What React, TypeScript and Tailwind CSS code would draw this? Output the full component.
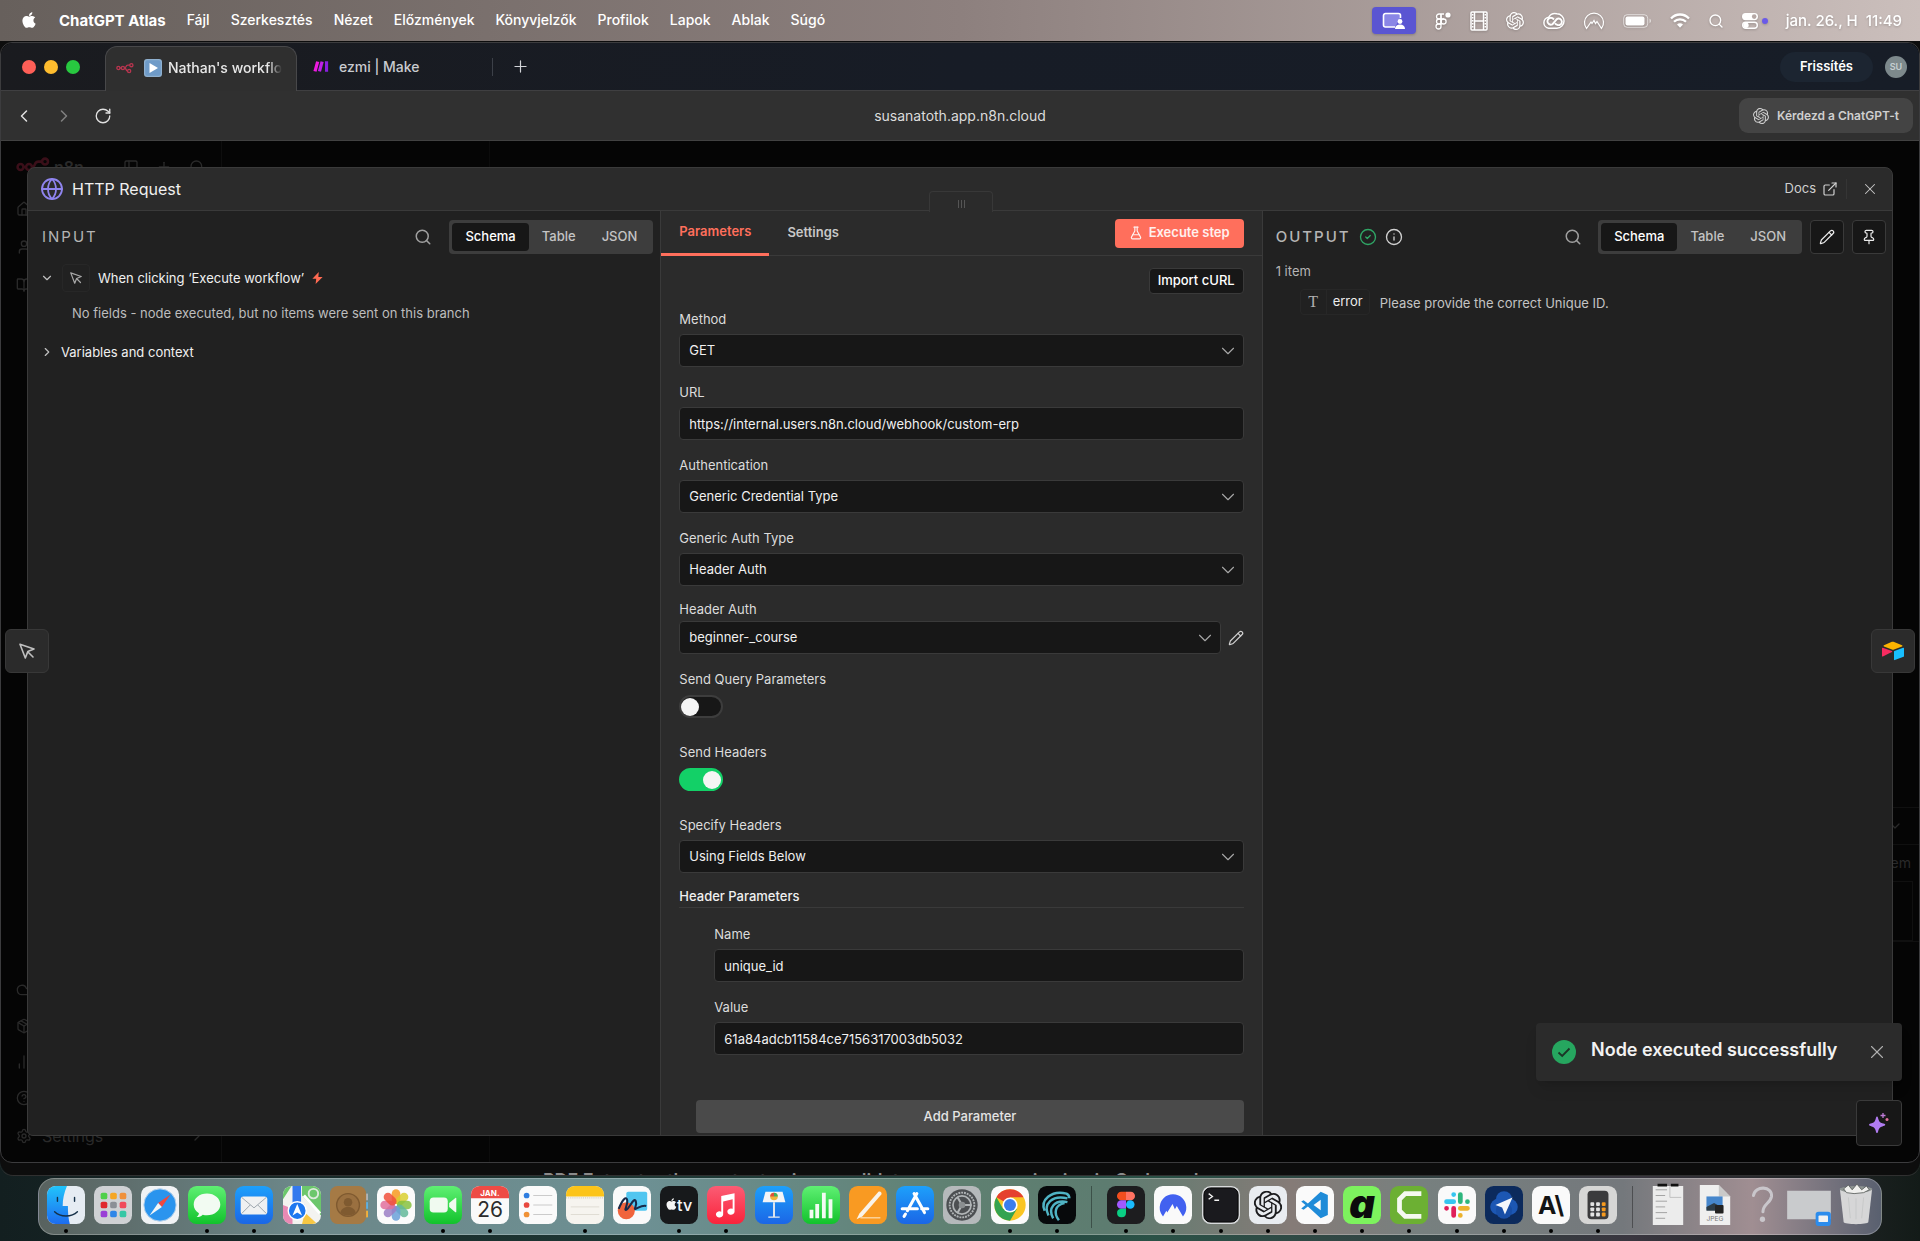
import { useState } from "react";
import type { ReactNode } from "react";
import {
  BookOpen, ChartNoAxesColumn, ChevronDown, ChevronLeft, ChevronRight, CircleHelp, CircleCheck, Cloud, ExternalLink,
  FlaskConical, Globe, House, Info, PanelLeft, Package, Pencil, Pin, Plus, RotateCw, Search, Settings, User, X,
} from "lucide-react";
import { FaApple } from "react-icons/fa";
import { SiOpenai } from "react-icons/si";

const menus = ["Fájl", "Szerkesztés", "Nézet", "Előzmények", "Könyvjelzők", "Profilok", "Lapok", "Ablak", "Súgó"];

function MenuBar() {
  return (
    <header className="flex h-[41px] shrink-0 items-center justify-between bg-linear-to-r from-[#67605c] via-[#8d807e] to-[#cbbfbc] pr-[18px] pl-5 text-sm text-white">
      <nav className="flex items-center gap-[21px] [text-shadow:0_1px_2px_rgba(0,0,0,0.25)]">
        <button aria-label="Apple"><FaApple className="size-[18px]" /></button>
        <button className="text-[15px] font-bold">ChatGPT Atlas</button>
        {menus.map((m) => (
          <button key={m} className="font-medium">{m}</button>
        ))}
      </nav>
      <div className="flex items-center gap-[18px] drop-shadow-[0_1px_1px_rgba(0,0,0,0.2)]">
        <button aria-label="Screen sharing" className="flex h-[27px] w-11 items-center justify-center rounded bg-[#5a55d2]">
          <svg viewBox="0 0 24 18" className="h-[18px] w-6" fill="none">
            <path d="M13 15H3.500a2 2 0 0 1-2-2V3.500a2 2 0 0 1 2-2h13a2 2 0 0 1 2 2V6" stroke="#fff" strokeWidth="1.600" fill="#8a86e6" />
            <circle cx="18" cy="9.500" r="2.400" fill="#fff" />
            <path d="M13 17c0-3 2-4.500 5-4.500s5 1.500 5 4.500z" fill="#fff" />
          </svg>
        </button>
        <svg viewBox="0 0 18 20" className="h-5 w-[18px]" fill="none" stroke="#fff" strokeWidth="1.300">
          <path d="M7 3H5a2.500 2.500 0 0 0 0 5h2zM7 3h3M7 8h3" />
          <path d="M7 8H5a2.500 2.500 0 0 0 0 5h2z" />
          <circle cx="9.600" cy="10.500" r="2.500" />
          <path d="M7 3v12.500A2.500 2.500 0 1 1 4.500 13H7" />
          <circle cx="14" cy="4" r="2.600" fill="#fff" stroke="none" />
        </svg>
        <svg viewBox="0 0 18 20" className="h-5 w-[18px]" fill="none" stroke="#fff" strokeWidth="1.500">
          <rect x="1" y="1" width="16" height="18" rx="1" />
          <path d="M4.500 1v18M13.500 1v18M4.500 10h9" />
          <path d="M2.700 3v14M15.300 3v14" strokeDasharray="1.500 1.500" />
        </svg>
        <SiOpenai className="size-[18px]" />
        <svg viewBox="0 0 24 18" className="h-[18px] w-[23px]" fill="none" stroke="#fff">
          <path d="M15.500 1.500a7.500 7.500 0 0 1 0 15H7A5.800 5.800 0 0 1 7 5a7.800 7.800 0 0 1 8.500-3.500z" strokeWidth="1.500" />
          <path d="M12.500 7.500 10.800 6a3.600 3.600 0 1 0 0 6.500L15.500 7a3.400 3.400 0 1 1 .5 6c-1.200-.2-1.800-.8-2.500-1.500" strokeWidth="2" />
        </svg>
        <svg viewBox="0 0 22 20" className="h-5 w-[22px]" fill="none" stroke="#fff" strokeWidth="1.200">
          <path d="M3.500 17.500A9.500 9.500 0 1 1 18.500 17.500L14 10.500l-1.500 2L11 9.500l-2 3-1-1.500z" />
        </svg>
        <svg viewBox="0 0 29 14" className="h-[14px] w-[29px]" fill="none">
          <rect x="0.700" y="0.700" width="24" height="12.600" rx="3.500" stroke="#fff" strokeOpacity=".6" />
          <rect x="2.500" y="2.500" width="19" height="9" rx="2" fill="#fff" />
          <path d="M26.500 4.800v4.400c1-.3 1.500-1.200 1.500-2.200s-.5-1.900-1.500-2.200z" fill="#fff" fillOpacity=".6" />
        </svg>
        <svg viewBox="0 0 20 15" className="h-[15px] w-5" fill="none" stroke="#fff" strokeWidth="2.300">
          <path d="M1 5.500C3.500 2.800 6.600 1.500 10 1.500s6.500 1.300 9 4" />
          <path d="M4 8.800a8.500 8.500 0 0 1 12 0" />
          <path d="M10 14.800 7 11.600a4.400 4.400 0 0 1 6 0z" fill="#fff" stroke="none" />
        </svg>
        <Search className="size-4" />
        <div className="flex items-center gap-1">
          <svg viewBox="0 0 16 16" className="size-4">
            <rect x="0" y="0" width="16" height="7.200" rx="3.600" fill="#fff" />
            <circle cx="12.200" cy="3.600" r="2.300" fill="#b5a8a5" />
            <rect x=".7" y="9.300" width="14.600" height="6" rx="3" fill="none" stroke="#fff" strokeWidth="1.400" />
            <circle cx="4" cy="12.300" r="2.700" fill="#fff" />
          </svg>
          <span className="size-1.5 rounded-full bg-[#6a5ae8]" />
        </div>
        <span className="text-[15px] font-medium whitespace-pre">jan. 26., H  11:49</span>
      </div>
    </header>
  );
}

function N8nMark({ className }: { className?: string }) {
  return (
    <svg viewBox="0 0 24 14" className={className} fill="none" stroke="currentColor" strokeWidth="1.800">
      <circle cx="3.200" cy="7" r="2.100" />
      <circle cx="9.200" cy="7" r="2.100" />
      <circle cx="20.500" cy="3.200" r="2.100" />
      <circle cx="17.500" cy="11" r="2.100" />
      <path d="M5.300 7h1.800M11.300 7c3 0 1-3.800 4.500-3.800h2.600M11.300 7c2.500 0 2 4 4 4" />
    </svg>
  );
}

function BrowserTabs() {
  return (
    <div className="flex h-12 items-end justify-between rounded-t-xl border-b border-[#3f3f41] bg-linear-to-r from-[#1a1b1f] via-[#171c26] to-[#171d27] pr-3">
      <div className="flex h-full items-end">
        <div className="flex h-full w-[104px] items-center gap-2 pl-[21px]">
          <button aria-label="Close window" className="size-3.5 rounded-full bg-[#ff5f57]" />
          <button aria-label="Minimize window" className="size-3.5 rounded-full bg-[#febc2e]" />
          <button aria-label="Zoom window" className="size-3.5 rounded-full bg-[#28c840]" />
        </div>
        <button className="-mb-px flex h-[45px] w-[192px] items-center gap-2.5 rounded-t-xl border border-b-0 border-[#48484a] bg-[#2f2f2f] px-2.5 pb-[3px] text-sm font-medium text-[#e8e8e8]">
          <N8nMark className="h-3 w-[18px] shrink-0 text-[#b8354f]" />
          <span className="flex items-center gap-1.5">
            <svg viewBox="0 0 18 18" className="size-[18px] shrink-0">
              <rect width="18" height="18" rx="3" fill="#8fb0cf" />
              <rect x="1.200" y="1.200" width="15.600" height="15.600" rx="2.200" fill="#6f9bc8" />
              <path d="M5.500 4v10l8.500-5z" fill="#fff" />
            </svg>
            <span className="whitespace-nowrap [mask-image:linear-gradient(to_right,black_88%,transparent)]">Nathan's workflo</span>
          </span>
        </button>
        <button className="flex h-full w-[195px] items-center gap-2.5 pl-4 text-sm font-medium text-[#c9cbd0]">
          <svg viewBox="0 0 18 14" className="h-[13px] w-4">
            <path d="M3.500 1 7 2 4 13 .5 12z" fill="#f01ae0" />
            <path d="M8.500 1 12 2 9 13 5.500 12z" fill="#c020e8" />
            <path d="M13.500 1H17v12h-3.500z" fill="#8a1fe0" />
          </svg>
          ezmi | Make
        </button>
        <div className="flex h-full items-center gap-[18px]">
          <span className="h-[18px] w-px bg-[#3c4048]" />
          <button aria-label="New tab"><Plus className="size-[19px] text-[#d2d4d8]" strokeWidth={1.5} /></button>
        </div>
      </div>
      <div className="flex h-full items-center gap-3">
        <button className="h-[30px] rounded-full bg-[#1c2531] px-5 text-[13px] font-semibold text-white">Frissítés</button>
        <button aria-label="Profile" className="size-[22px] rounded-full bg-[#7d898c] text-[9px] font-semibold text-[#c6cfd1]">SU</button>
      </div>
    </div>
  );
}

function Toolbar() {
  return (
    <div className="grid h-[50px] grid-cols-[1fr_auto_1fr] items-center border-b border-[#424242] bg-[#303030] px-1.5">
      <div className="flex items-center gap-5 pl-[7px] text-[#e0e0e0]">
        <button aria-label="Back"><ChevronLeft className="size-5" strokeWidth={1.8} /></button>
        <button aria-label="Forward" className="text-[#808080]"><ChevronRight className="size-5" strokeWidth={1.8} /></button>
        <button aria-label="Reload"><RotateCw className="size-[18px]" strokeWidth={1.8} /></button>
      </div>
      <input aria-label="Address" defaultValue="susanatoth.app.n8n.cloud" className="w-[400px] bg-transparent text-center text-sm text-[#dcdcdc] outline-none" />
      <button className="flex h-[35px] items-center gap-2 justify-self-end rounded-[9px] bg-[#444444] px-3.5 text-xs font-semibold text-[#cfcfcf]">
        <SiOpenai className="size-4" />
        Kérdezd a ChatGPT-t
      </button>
    </div>
  );
}

// Editor sidebar seen through the modal backdrop
function DimmedPage() {
  return (
    <div aria-hidden className="absolute inset-0 overflow-hidden text-[#2a2a2a]">
      <div className="flex h-full">
        <div className="flex w-[221px] flex-col justify-between border-r border-[#0e0e0e] pt-3.5 pr-4 pb-4 pl-[15px]">
          <div className="flex flex-col gap-[22px]">
            <div className="flex items-center justify-between">
              <span className="flex items-center gap-1 font-semibold"><N8nMark className="h-5 w-[34px] text-[#3a0f19]" />n8n</span>
              <span className="flex gap-[17px]"><PanelLeft className="size-4" /><Plus className="size-4" /><Search className="size-4" /></span>
            </div>
            <House className="size-4" />
            <User className="size-4" />
            <BookOpen className="size-4" />
          </div>
          <div className="flex flex-col gap-5">
            <Cloud className="size-4" />
            <Package className="size-4" />
            <ChartNoAxesColumn className="size-4" />
            <CircleHelp className="size-4" />
            <span className="flex h-5 items-center gap-2.5 text-base"><Settings className="size-4" />Settings<ChevronRight className="ml-auto size-4" /></span>
          </div>
        </div>
        <div className="w-[268px] border-r border-[#0c0c0c]" />
        <div className="flex flex-1 flex-col items-end justify-end">
          <div className="mb-[220px] w-full border-y border-[#101010]">
            <ChevronDown className="my-2.5 mr-4 ml-auto size-4" />
            <p className="border-t border-[#101010] py-2 pr-2 text-right text-sm">1 item</p>
            <div className="mr-1.5 h-[60px] border border-[#101010]" />
          </div>
        </div>
      </div>
    </div>
  );
}

function ViewTabs({ label }: { label: string }) {
  const [active, setActive] = useState("Schema");
  return (
    <div role="tablist" aria-label={label} className="flex h-[34px] items-stretch rounded bg-[#3d3d3d] p-[3px] text-[13px]">
      {["Schema", "Table", "JSON"].map((t) => (
        <button
          key={t}
          role="tab"
          aria-selected={active === t}
          onClick={() => setActive(t)}
          className={active === t ? "rounded bg-[#171717] px-[13px] font-medium text-white" : "px-[13px] font-medium text-[#c4c4c4]"}
        >
          {t}
        </button>
      ))}
    </div>
  );
}

function InputPanel() {
  return (
    <section className="flex flex-col bg-[#212121] pl-3">
      <div className="flex items-center pt-[9px] pr-[7px] pl-0.5">
        <h2 className="text-[15px] tracking-[2px] text-[#b5b5b5]">INPUT</h2>
        <button aria-label="Search input" className="mr-[17px] ml-auto text-[#a0a0a0]"><Search className="size-[18px]" /></button>
        <ViewTabs label="Input view" />
      </div>
      <div className="mt-[9px] flex h-[30px] items-center gap-2 text-[13px] leading-5 text-[#f0f0f0]">
        <button aria-label="Collapse node"><ChevronDown className="size-3.5 text-[#c0c0c0]" /></button>
        <span className="flex h-7 w-7 items-center justify-center rounded border border-[#272727]">
          <MousePointerIcon className="size-3 text-[#a8a8a8]" />
        </span>
        <span>When clicking ‘Execute workflow’</span>
        <svg viewBox="0 0 12 14" className="h-3 w-[11px]"><path d="M7.500 0 0 8h4.500L3.800 14 12 5.800H7z" fill="#ff6a52" /></svg>
      </div>
      <p className="mt-2.5 pl-8 text-[13px] leading-5 text-[#bdbdbd]">No fields - node executed, but no items were sent on this branch</p>
      <button className="mt-[19px] flex items-center gap-[7px] text-left text-[13px] leading-5 text-[#f0f0f0]">
        <ChevronRight className="size-3.5 text-[#c0c0c0]" />
        Variables and context
      </button>
    </section>
  );
}

function MousePointerIcon({ className }: { className?: string }) {
  return (
    <svg viewBox="0 0 16 16" className={className} fill="none" stroke="currentColor" strokeWidth="1.600" strokeLinejoin="round" strokeLinecap="round">
      <path d="M1 1.200 15 6 8.800 8.600 6.300 15z" />
      <path d="m9 9 5 5" />
    </svg>
  );
}

function Field({ id, label, children }: { id: string; label: string; children: ReactNode }) {
  return (
    <div className="flex flex-col gap-[5px]">
      <label htmlFor={id} className="text-[13px] leading-5 text-[#dcdcdc]">{label}</label>
      {children}
    </div>
  );
}

const box = "h-[33px] w-full rounded border border-[#3a3a3a] bg-[#171717] px-[9px] text-[13px] text-[#f0f0f0] outline-none";

function SelectBox({ id, value }: { id: string; value: string }) {
  return (
    <div className="relative min-w-0 flex-1">
      <select id={id} className={`${box} block appearance-none`}>
        <option>{value}</option>
      </select>
      <ChevronDown className="pointer-events-none absolute top-1.5 right-[5px] size-[22px] text-[#a8a8a8]" strokeWidth={1.2} />
    </div>
  );
}

function Toggle({ id, on }: { id: string; on?: boolean }) {
  return (
    <label className="mt-px mb-[9px] block h-[23px] w-11 cursor-pointer">
      <input id={id} type="checkbox" defaultChecked={on} className="peer sr-only" />
      <span className="flex h-[23px] w-11 items-center rounded-full border-2 border-[#3d3d3d] bg-[#171717] peer-checked:justify-end peer-checked:border-[#13d067] peer-checked:bg-[#13d067]">
        <span className="size-[18px] rounded-full bg-[#f5f5f5]" />
      </span>
    </label>
  );
}

function ParametersPanel() {
  return (
    <section className="relative flex flex-col border-x border-[#3a3a3a] bg-[#2b2b2b]">
      <div className="absolute -top-5 left-1/2 flex h-[21px] w-16 -translate-x-1/2 items-center justify-center gap-0.5 rounded-t border border-b-0 border-[#383838] bg-[#2b2b2b] pt-1">
        <span className="h-2 w-px bg-[#555]" />
        <span className="h-2 w-px bg-[#555]" />
        <span className="h-2 w-px bg-[#555]" />
      </div>
      <div className="flex h-[45px] items-center justify-between border-b border-[#3a3a3a] pr-[18px]">
        <div role="tablist" className="flex h-full text-[13px] font-semibold">
          <button role="tab" aria-selected="true" className="-mb-px border-b-[3px] border-[#ff6f5c] px-[18px] text-[#ff6f5c]">Parameters</button>
          <button role="tab" aria-selected="false" className="px-[18px] text-[#c8c8c8]">Settings</button>
        </div>
        <button className="flex h-[29px] items-center gap-1.5 rounded bg-[#ff6f5c] px-3.5 text-[13px] font-semibold text-[#fff0ee]">
          <FlaskConical className="size-3.5" />
          Execute step
        </button>
      </div>
      <form className="flex flex-1 flex-col px-[18px] pt-3 pb-0.5">
        <button type="button" className="h-[26px] self-end rounded border border-[#3a3a3a] bg-[#171717] px-2 text-[13px] font-medium text-white">Import cURL</button>
        <div className="mt-[15px] flex flex-col gap-[15px]">
          <Field id="method" label="Method"><SelectBox id="method" value="GET" /></Field>
          <Field id="url" label="URL">
            <input id="url" className={box} defaultValue="https://internal.users.n8n.cloud/webhook/custom-erp" />
          </Field>
          <Field id="auth" label="Authentication"><SelectBox id="auth" value="Generic Credential Type" /></Field>
          <Field id="authType" label="Generic Auth Type"><SelectBox id="authType" value="Header Auth" /></Field>
        </div>
        <div className="mt-[13px] flex flex-col gap-0.5">
          <label htmlFor="headerAuth" className="text-[13px] leading-5 text-[#dcdcdc]">Header Auth</label>
          <div className="flex items-center gap-[7px]">
            <SelectBox id="headerAuth" value="beginner-_course" />
            <button type="button" aria-label="Edit credential"><Pencil className="size-4 text-[#d0d0d0]" strokeWidth={1.8} /></button>
          </div>
        </div>
        <div className="mt-[15px] flex flex-col gap-[15px]">
          <Field id="sendQuery" label="Send Query Parameters"><Toggle id="sendQuery" /></Field>
          <Field id="sendHeaders" label="Send Headers"><Toggle id="sendHeaders" on /></Field>
          <Field id="specify" label="Specify Headers"><SelectBox id="specify" value="Using Fields Below" /></Field>
        </div>
        <h3 className="mt-[13px] border-b border-[#3a3a3a] pb-px text-[13px] leading-5 font-medium text-[#f0f0f0]">Header Parameters</h3>
        <div className="mt-4 flex flex-col gap-[15px] pl-[35px]">
          <Field id="hname" label="Name"><input id="hname" className={box} defaultValue="unique_id" /></Field>
          <Field id="hvalue" label="Value"><input id="hvalue" className={box} defaultValue="61a84adcb11584ce7156317003db5032" /></Field>
        </div>
        <button type="button" className="mt-auto ml-[17px] h-[33px] rounded-sm bg-[#4a4a4a] text-[13px] font-medium text-[#e4e4e4]">Add Parameter</button>
      </form>
    </section>
  );
}

function OutputPanel() {
  return (
    <section className="flex flex-col bg-[#212121] pl-[13px]">
      <div className="flex items-center gap-2 pt-[9px] pr-1.5">
        <h2 className="text-[15px] font-medium tracking-[2px] text-[#b5b5b5]">OUTPUT</h2>
        <CircleCheck className="size-[18px] text-[#2fa565]" strokeWidth={1.8} />
        <Info className="size-[18px] text-[#d0d0d0]" strokeWidth={1.8} />
        <button aria-label="Search output" className="mr-2 ml-auto text-[#a0a0a0]"><Search className="size-[18px]" /></button>
        <ViewTabs label="Output view" />
        <button aria-label="Edit output" className="flex size-[34px] items-center justify-center rounded border border-[#3a3a3a] bg-[#171717] text-[#ececec]"><Pencil className="size-4" strokeWidth={1.8} /></button>
        <button aria-label="Pin data" className="flex size-[34px] items-center justify-center rounded border border-[#3a3a3a] bg-[#171717] text-[#ececec]"><Pin className="size-4" strokeWidth={1.8} /></button>
      </div>
      <p className="mt-[7px] text-[13px] leading-5 text-[#b5b5b5]">1 item</p>
      <div className="mt-2 flex items-center pl-6 text-[13px]">
        <div className="flex h-[26px] items-center rounded border border-[#272727]">
          <span className="flex h-full w-[26px] items-center justify-center border-r border-[#272727] font-['Liberation_Serif',serif] text-base text-[#b0b0b0]">T</span>
          <span className="px-1.5 text-[#ececec]">error</span>
        </div>
        <span className="pt-1 pl-2.5 text-[#c4c4c4]">Please provide the correct Unique ID.</span>
      </div>
    </section>
  );
}

function NodeModal() {
  return (
    <div className="relative mx-[26px] mt-[26px] mb-[26px] flex flex-1 flex-col overflow-hidden rounded-t-lg rounded-b-md border border-[#3a3a3a] bg-[#2b2b2b]">
      <div className="flex h-[43px] shrink-0 items-center gap-2 border-b border-[#3a3a3a] pr-[13px] pl-3">
        <Globe className="size-6 text-[#8f84ee]" strokeWidth={1.8} />
        <h1 className="text-base text-[#f0f0f0]">HTTP Request</h1>
        <a href="#docs" className="ml-auto flex items-center gap-1.5 text-[13px] text-[#d0d0d0]">
          Docs <ExternalLink className="size-4" strokeWidth={1.8} />
        </a>
        <span className="h-5 w-px bg-[#353535]" />
        <button aria-label="Close" className="ml-1.5"><X className="size-[18px] text-[#c8c8c8]" strokeWidth={1.4} /></button>
      </div>
      <div className="grid flex-1 grid-cols-[633fr_603fr_630fr]">
        <InputPanel />
        <ParametersPanel />
        <OutputPanel />
      </div>
    </div>
  );
}

function Toast() {
  return (
    <div role="status" className="absolute right-[17px] bottom-[81px] flex h-[58px] w-[366px] items-center rounded bg-[#2b2b2b] pr-3.5 pl-4 shadow-lg">
      <svg viewBox="0 0 24 24" className="size-6" fill="none">
        <circle cx="12" cy="12" r="12" fill="#26a65f" />
        <path d="m6.500 12.500 3.700 3.500 7.300-7.500" stroke="#1b3526" strokeWidth="1.800" />
      </svg>
      <span className="ml-[15px] pb-1 text-lg font-semibold text-[#f2f2f2]">Node executed successfully</span>
      <button aria-label="Dismiss" className="ml-auto"><X className="size-[22px] text-[#b0b0b0]" strokeWidth={1.2} /></button>
    </div>
  );
}

function BrowserWindow() {
  return (
    <div className="mt-px flex flex-1 flex-col overflow-hidden rounded-xl border border-[#3c3c3e] bg-[#050505]">
      <BrowserTabs />
      <Toolbar />
      <main className="relative flex flex-1 flex-col">
        <DimmedPage />
        <NodeModal />
        <button aria-label="Previous node" className="absolute top-[488px] left-1 flex size-11 items-center justify-center rounded-md border border-[#383838] bg-[#2b2b2b]">
          <MousePointerIcon className="size-4 text-[#c0c0c0]" />
        </button>
        <button aria-label="Next node" className="absolute top-[488px] right-1 flex size-11 items-center justify-center rounded-md border border-[#383838] bg-[#2b2b2b]">
          <svg viewBox="0 0 24 20" className="h-5 w-6">
            <path d="M12.500.8a2 2 0 0 0-1.600 0L3 4.200c-.6.200-.6 1 0 1.200l8 3.200a3 3 0 0 0 2 0l8-3.200c.6-.2.600-1 0-1.200z" fill="#fcb400" />
            <path d="M13 10.600v8c0 .4.400.6.800.500l8.800-3.400c.3-.1.400-.3.400-.5v-8c0-.4-.4-.6-.8-.5l-8.800 3.400c-.2.100-.4.300-.4.500z" fill="#18bfff" />
            <path d="m11 11-2.700 1.300-6.400 3.100c-.4.200-.9-.1-.9-.5V7.200c0-.4.400-.7.800-.5L10.800 10c.5.200.6.800.2 1z" fill="#f82b60" />
          </svg>
        </button>
        <Toast />
        <button aria-label="AI assistant" className="absolute right-[17px] bottom-4 flex size-[46px] items-center justify-center rounded border border-[#3a3a3a] bg-[#171717]">
          <svg viewBox="0 0 20 20" className="size-5">
            <path d="M8 3.500c1 0 1 1.500 1.500 3 .7 2.200 1.600 3 3.800 3.700 1.500.5 3 .6 3 1.600s-1.500 1.100-3 1.600c-2.200.7-3.100 1.500-3.800 3.700-.5 1.500-.5 3-1.500 3s-1-1.500-1.500-3c-.7-2.200-1.600-3-3.800-3.700-1.500-.5-2.700-.6-2.700-1.600s1.200-1.100 2.700-1.600c2.200-.7 3.100-1.500 3.800-3.700.5-1.500.5-3 1.500-3z" fill="#b07cf0" />
            <path d="M14 0v5M11.500 2.500h5" stroke="#c07cd8" strokeWidth="1.300" />
            <circle cx="18" cy="6.500" r="1.500" fill="#e0709c" />
          </svg>
        </button>
      </main>
    </div>
  );
}

function Tile({ fill, children }: { fill: string; children?: ReactNode }) {
  return (
    <>
      <rect width="40" height="40" rx="9" fill={fill} />
      {children}
    </>
  );
}

const launchColors = ["#4fd04a", "#f5a623", "#f0913a", "#e0282e", "#8b8f96", "#f04a5c", "#9a3fd6", "#2f86e8", "#35c7a5"];
const petals = ["#f79a1e", "#d9cf2f", "#86c13f", "#63b89a", "#6aa0d8", "#9b7fc6", "#e0709c", "#f0503c"];

const apps: { name: string; running?: boolean; art: ReactNode }[] = [
  {
    name: "Finder", running: true,
    art: (
      <>
        <Tile fill="#e6ecf3" />
        <path d="M9 0h12c-3 7-4.500 14-4.500 21H22c0 7 .5 13 2 19H9a9 9 0 0 1-9-9V9a9 9 0 0 1 9-9z" fill="url(#finder)" />
        <path d="M11 12v4M29 12v4M8 27c6 6 18 6 24 0" stroke="#153048" strokeWidth="1.500" fill="none" strokeLinecap="round" />
      </>
    ),
  },
  {
    name: "Launchpad",
    art: (
      <Tile fill="#cfd1d4">
        {launchColors.map((c, i) => (
          <rect key={c} x={7 + (i % 3) * 10} y={7 + Math.floor(i / 3) * 9.5} width="7" height="7" rx="2" fill={c} />
        ))}
      </Tile>
    ),
  },
  {
    name: "Safari",
    art: (
      <Tile fill="#f1f3f5">
        <circle cx="20" cy="20" r="17" fill="#2a94ee" stroke="#b9d3ea" strokeWidth="1" />
        <path d="m31 9-9 13-4-4z" fill="#f0483e" />
        <path d="M9 31l9-13 4 4z" fill="#f3f6f8" />
      </Tile>
    ),
  },
  {
    name: "Messages", running: true,
    art: (
      <Tile fill="url(#green)">
        <path d="M20 8c-8 0-14 5-14 11.500 0 4 2 7 5.500 9.200 0 1.500-1 3-2.500 4 3 0 5-1 6.500-2.500 1.500.4 3 .6 4.500.6 8 0 14-5 14-11.300S28 8 20 8z" fill="#f2fbf2" />
      </Tile>
    ),
  },
  {
    name: "Mail", running: true,
    art: (
      <Tile fill="url(#blue)">
        <rect x="6" y="11" width="28" height="19" rx="3" fill="#f0f1f2" />
        <path d="m7 12 13 11 13-11M7 29l9-9M33 29l-9-9" stroke="#9aa3ab" fill="none" />
      </Tile>
    ),
  },
  {
    name: "Maps", running: true,
    art: (
      <>
        <Tile fill="#f3f3f0" />
        <path d="M0 9a9 9 0 0 1 9-9L0 14zM20 0h11a9 9 0 0 1 9 9v22L20 10z" fill="#6cc76c" />
        <path d="M0 20l10 4v16H9a9 9 0 0 1-9-9z" fill="#e989b4" />
        <path d="M20 40l3-12 12 11-4 1z" fill="#f7c744" />
        <path d="M10 0h9v26h-9z" fill="#3379ee" />
        <path d="M22 10l17 19" stroke="#fff" strokeWidth="3" />
        <circle cx="32" cy="8" r="5" fill="none" stroke="#dceadc" strokeWidth="2" />
        <circle cx="15" cy="26" r="9.500" fill="#1f78f0" stroke="#fff" strokeWidth="1.500" />
        <path d="m15 19 5 12-5-3-5 3z" fill="#fff" />
      </>
    ),
  },
  {
    name: "Contacts",
    art: (
      <>
        <path d="M36 8h4v7h-4z" fill="#b0b3b5" /><path d="M36 17h4v7h-4z" fill="#5eb0e0" /><path d="M36 26h4v7h-4z" fill="#f0b03c" />
        <rect width="38" height="40" rx="8" fill="#a57a45" />
        <circle cx="19" cy="20" r="12" fill="#9a7040" stroke="#7f5a30" strokeWidth="1.500" />
        <circle cx="19" cy="17" r="4.500" fill="#7f5a30" /><path d="M11 28c1-8 15-8 16 0-4 4-12 4-16 0z" fill="#7f5a30" />
      </>
    ),
  },
  {
    name: "Photos",
    art: (
      <Tile fill="#fbfbfb">
        {petals.map((c, i) => (
          <rect key={c} x="15.500" y="3.500" width="9" height="15.500" rx="4.500" fill={c} opacity=".85" transform={`rotate(${i * 45} 20 20)`} />
        ))}
      </Tile>
    ),
  },
  {
    name: "FaceTime", running: true,
    art: (
      <Tile fill="url(#green)">
        <rect x="6" y="12" width="19" height="16" rx="4" fill="#f0faf0" />
        <path d="m26.500 18 6.500-5.500c.6-.4 1 0 1 .5v14c0 .6-.5 1-1 .500L26.500 22z" fill="#f0faf0" />
      </Tile>
    ),
  },
  {
    name: "Calendar", running: true,
    art: (
      <>
        <Tile fill="#fafafa" />
        <path d="M0 13V9a9 9 0 0 1 9-9h22a9 9 0 0 1 9 9v4z" fill="#ee4b45" />
        <text x="20" y="10" fontSize="8.500" fontWeight="700" fill="#fff" textAnchor="middle">JAN.</text>
        <text x="20" y="33" fontSize="22" fill="#2c2c2c" textAnchor="middle">26</text>
      </>
    ),
  },
  {
    name: "Reminders",
    art: (
      <Tile fill="#fafafa">
        <circle cx="8" cy="10" r="3" fill="#2f7de0" /><circle cx="8" cy="20" r="3" fill="#e8483e" /><circle cx="8" cy="30" r="3" fill="#f09236" />
        <path d="M15 10h20M15 20h20M15 30h20" stroke="#c8c8c8" />
      </Tile>
    ),
  },
  {
    name: "Notes", running: true,
    art: (
      <>
        <Tile fill="#f6f4ef" />
        <path d="M0 11V9a9 9 0 0 1 9-9h22a9 9 0 0 1 9 9v2z" fill="#fcc419" />
        <path d="M0 12.500h40" stroke="#c9c4b4" strokeDasharray="1 1" /><path d="M5 22h30M5 30h30" stroke="#dedbd2" />
      </>
    ),
  },
  {
    name: "Freeform",
    art: (
      <Tile fill="#fafafa">
        <rect x="14" y="6" width="22" height="20" rx="2" fill="#52c6f0" /><circle cx="14" cy="26" r="9" fill="#f0643c" />
        <path d="M6 24c4-10 8-14 9-9s-4 11-1 10 8-14 10-9-3 9 0 8 6-4 11-3" fill="none" stroke="#182a4a" strokeWidth="2.200" />
      </Tile>
    ),
  },
  {
    name: "TV", running: true,
    art: (
      <Tile fill="#17191b">
        <FaApple x="5" y="12" size={14} color="#f5f5f5" />
        <text x="18" y="26" fontSize="17" fontWeight="500" fill="#f5f5f5">tv</text>
      </Tile>
    ),
  },
  {
    name: "Music", running: true,
    art: (
      <Tile fill="url(#red)">
        <path d="M15 10.500 29 7.500V27a3.800 3.300 0 1 1-2-3V14l-10 2.200V30a3.800 3.300 0 1 1-2-3z" fill="#fff" />
      </Tile>
    ),
  },
  {
    name: "Keynote",
    art: (
      <Tile fill="url(#blue)">
        <path d="M11 6h18l3 11H8z" fill="#f3f5f7" /><path d="M19 17h2v15h-2zM14 32h12v1.500H14z" fill="#e6eaee" />
        <circle cx="20" cy="11" r="4" fill="#f0b43c" /><path d="M20 11V7a4 4 0 0 1 4 4z" fill="#40b060" /><path d="M20 11h-4a4 4 0 0 1 4-4z" fill="#e0503c" />
      </Tile>
    ),
  },
  {
    name: "Numbers",
    art: (
      <Tile fill="url(#green)">
        <path d="M8 25h4v9H8zM14 19h4v15h-4zM21 7h4v27h-4zM28 14h4v20h-4z" fill="#f3fbf3" />
      </Tile>
    ),
  },
  {
    name: "Pages",
    art: (
      <Tile fill="#f99a22">
        <path d="M31 6 11 29l-3 6 6-3L34 9c1-2-1-4-3-3z" fill="#faf3e8" /><path d="M12 33.500h21" stroke="#fde3bd" strokeWidth="1.200" />
      </Tile>
    ),
  },
  {
    name: "App Store",
    art: (
      <Tile fill="url(#blue)">
        <path d="M22 8 12 26M19 8l11 20M6.500 24h16M27 24h6.500M10 29.500l-1.500 2.500" stroke="#fff" strokeWidth="3.200" strokeLinecap="round" />
      </Tile>
    ),
  },
  {
    name: "System Settings",
    art: (
      <Tile fill="#b5b9bb">
        <circle cx="20" cy="20" r="16.500" fill="#4c4f52" /><circle cx="20" cy="20" r="13" fill="none" stroke="#b0b4b6" strokeWidth="2" strokeDasharray="2 1" />
        <circle cx="20" cy="20" r="9.500" fill="none" stroke="#b0b4b6" strokeWidth="1.800" />
        <path d="M20 20h10M20 20l-5-8.600M20 20l-5 8.600" stroke="#b0b4b6" strokeWidth="2.200" /><circle cx="20" cy="20" r="3.500" fill="#8a8e90" />
      </Tile>
    ),
  },
  {
    name: "Chrome", running: true,
    art: (
      <Tile fill="#fbfbfb">
        <circle cx="20" cy="20" r="16.500" fill="#f9c522" />
        <path d="M20 20 5.700 11.800A16.500 16.500 0 0 1 34.300 11.800H20z" fill="#e5402f" />
        <path d="M5.700 11.800A16.500 16.500 0 0 0 20 36.500l7.200-12.400L20 20l-7.200 4.100z" fill="#34a350" />
        <circle cx="20" cy="20" r="8" fill="#fff" /><circle cx="20" cy="20" r="6.300" fill="#3b7ded" />
      </Tile>
    ),
  },
  {
    name: "Wave", running: true,
    art: (
      <Tile fill="#07090b">
        <path d="M7 26C2 15 14 4 30 8c2 1 3 3 3 5M11 31C5 19 15 9 31 13M16 34C10 24 17 14 31 17M22 36c-6-8-4-16 6-18" fill="none" stroke="#4fb3c4" strokeWidth="2.600" />
      </Tile>
    ),
  },
];

const moreApps: typeof apps = [
  {
    name: "Figma", running: true,
    art: (
      <Tile fill="#1d1d1f">
        <path d="M20 6h-5a4.500 4.500 0 0 0 0 9h5z" fill="#f24e1e" /><path d="M20 6h5a4.500 4.500 0 0 1 0 9h-5z" fill="#ff7262" />
        <path d="M20 15h-5a4.500 4.500 0 0 0 0 9h5z" fill="#a259ff" /><circle cx="24.500" cy="19.500" r="4.500" fill="#1abcfe" />
        <path d="M15 24h5v4.500a4.700 4.500 0 1 1-5-4.500z" fill="#0acf83" />
      </Tile>
    ),
  },
  {
    name: "NordVPN", running: true,
    art: (
      <Tile fill="#fafafa">
        <path d="M9.500 32A14 14 0 1 1 30.500 32L24 21l-2 3.500L19.500 19 14 28l-1-2z" fill="#4261f0" />
      </Tile>
    ),
  },
  {
    name: "Terminal", running: true,
    art: (
      <Tile fill="#d8dadc">
        <rect x="2" y="2" width="36" height="36" rx="7" fill="#1a1a1e" stroke="#000" />
        <path d="m7 8 4 3-4 3M13 15h5" stroke="#f2f2f2" strokeWidth="1.400" fill="none" />
      </Tile>
    ),
  },
  { name: "ChatGPT", running: true, art: <Tile fill="#e9ecf0"><SiOpenai x="5" y="5" size={30} color="#1c1c1e" /></Tile> },
  {
    name: "Visual Studio Code", running: true,
    art: (
      <Tile fill="#fafafa">
        <path d="M26 6 12.500 18.500 8 15l-2.500 1.200L10 20l-4.500 3.800L8 25l4.500-3.500L26 34l7.500-3.500v-21zm0 8.500v11L18.500 20z" fill="#1f8bd8" />
      </Tile>
    ),
  },
  {
    name: "Anytype", running: true,
    art: (
      <Tile fill="#7df25e">
        <text x="20" y="34" fontSize="42" fontWeight="900" fontStyle="italic" fill="#0c0c0c" textAnchor="middle">a</text>
      </Tile>
    ),
  },
  { name: "Camtasia", running: true, art: <Tile fill="#6cb033"><path d="M33 8H16l-6 6v12l6 6h17" fill="none" stroke="#f5f9f0" strokeWidth="5" /></Tile> },
  {
    name: "Slack", running: true,
    art: (
      <Tile fill="#fafafa">
        <g strokeWidth="5" strokeLinecap="round">
          <path d="M9 16.500h7.500M16.500 9h0" stroke="#36c5f0" />
          <path d="M23.500 9v7.500M31 16.500h0" stroke="#2eb67d" />
          <path d="M16.500 23.500V31M9 23.500h0" stroke="#e01e5a" />
          <path d="M23.500 23.500H31M23.500 31h0" stroke="#ecb22e" />
        </g>
      </Tile>
    ),
  },
  {
    name: "Navigator", running: true,
    art: (
      <Tile fill="#0c2a5c">
        <circle cx="20" cy="14" r="8.500" fill="#1c57b4" /><circle cx="14" cy="22" r="8.500" fill="#1c57b4" /><circle cx="26" cy="22" r="8.500" fill="#1c57b4" /><circle cx="20" cy="26" r="8.500" fill="#184ea6" />
        <path d="M29 12 11 20l7 2.500L21 30z" fill="#f4f7fb" />
      </Tile>
    ),
  },
  {
    name: "Anthropic", running: true,
    art: (
      <Tile fill="#fafafa">
        <text x="20" y="29" fontSize="26" fontWeight="700" fill="#141414" textAnchor="middle">A\</text>
      </Tile>
    ),
  },
  {
    name: "Calculator", running: true,
    art: (
      <Tile fill="#d6d6d5">
        <rect x="9" y="5" width="22" height="30" rx="4" fill="#3b3b3d" />
        {[0, 1, 2].map((r) => [0, 1, 2].map((c) => (
          <rect key={`${r}${c}`} x={12 + c * 6} y={17 + r * 5.5} width="4" height="4" rx="1" fill={c === 2 ? "#f79a1e" : "#e4e4e4"} />
        )))}
      </Tile>
    ),
  },
];

const stack: typeof apps = [
  {
    name: "Document",
    art: <><path d="M4 0h32v41H4z" fill="#ececec" /><path d="M7 4h12M7 10h10M7 16h12M7 22h10M7 28h12M7 34h10" stroke="#a0a0a0" /><path d="M22 0v12h12" fill="none" stroke="#c0c0c0" /><path d="M9-1h10M23-1h8" stroke="#111" strokeWidth="3" /></>,
  },
  {
    name: "Image",
    art: (
      <>
        <path d="M4-1h20l12 12v30H4z" fill="#efefef" /><path d="M24-1v12h12z" fill="#c9c9c9" />
        <rect x="11" y="11" width="17" height="14" fill="#4686cc" /><path d="M11 22l8-4 9 5v3H11z" fill="#2d3c48" /><rect x="20" y="20" width="9" height="9" rx="1" fill="#222" />
        <text x="20" y="37" fontSize="7" fill="#777" textAnchor="middle">JPEG</text>
      </>
    ),
  },
  { name: "Missing item", art: <><path d="M11 10c2-11 20-10 19 1-1 7-9 8-9 16" fill="none" stroke="#c9c6cb" strokeWidth="3.200" strokeLinecap="round" /><circle cx="20.500" cy="35" r="2.800" fill="#c9c6cb" /></> },
  {
    name: "Minimized mail",
    art: <><path d="M-3 5h46v30H-3z" fill="#c9cbcd" /><rect x="27" y="27" width="16" height="15" rx="3" fill="#2c8cec" /><rect x="30" y="31" width="10" height="7" rx="1" fill="#f2f2f2" /></>,
  },
  {
    name: "Trash",
    art: (
      <>
        <path d="M3 3h34l-4 35c-.5 3-25.500 3-26 0z" fill="#dfe0e0" opacity=".92" /><ellipse cx="20" cy="3.500" rx="17" ry="3.500" fill="#8e9492" />
        <path d="m7 3 5-4 4 5 5-6 5 6 5-4 3 4-6 3-10 1-8-1z" fill="#f0f0ee" stroke="#4a4f4d" strokeWidth=".8" /><path d="M12 12l2 22M20 13v22M28 12l-2 22" stroke="#c6c8c8" />
      </>
    ),
  },
];

function DockItems({ items }: { items: typeof apps }) {
  return items.map((app) => (
    <button key={app.name} aria-label={app.name} className="flex w-[37px] flex-col items-center gap-[5px]">
      <svg viewBox="0 0 40 40" className="size-[38px] overflow-visible">{app.art}</svg>
      <span className={app.running ? "size-1 rounded-full bg-black" : "size-1"} />
    </button>
  ));
}

function Dock() {
  return (
    <footer className="mx-[38px] mt-0.5 mb-1.5 flex h-[57px] shrink-0 items-start justify-between rounded-2xl border border-white/25 bg-[linear-gradient(90deg,#58625f_0%,#6c8789_14%,#6d9093_33%,#5f8071_50%,#5d7c70_58%,#857b77_68%,#77807f_75%,#74787c_86%,#a08e92_93%,#59606f_100%)] pt-[7px] pr-1.5 pl-2">
      <svg className="absolute size-0">
        <defs>
          <linearGradient id="finder" x1="0" y1="0" x2="0" y2="1"><stop stopColor="#21c4fb" /><stop offset="1" stopColor="#1d6cf0" /></linearGradient>
          <linearGradient id="green" x1="0" y1="0" x2="0" y2="1"><stop stopColor="#5ff073" /><stop offset="1" stopColor="#12c22c" /></linearGradient>
          <linearGradient id="blue" x1="0" y1="0" x2="0" y2="1"><stop stopColor="#1da0fb" /><stop offset="1" stopColor="#1b66e6" /></linearGradient>
          <linearGradient id="red" x1="0" y1="0" x2="0" y2="1"><stop stopColor="#fb5c74" /><stop offset="1" stopColor="#fa233b" /></linearGradient>
        </defs>
      </svg>
      <DockItems items={apps} />
      <span className="flex h-[42px] w-3 justify-center"><span className="w-px bg-black/35" /></span>
      <DockItems items={moreApps} />
      <span className="flex h-[42px] w-3 justify-center"><span className="w-px bg-black/35" /></span>
      <DockItems items={stack} />
    </footer>
  );
}

export default function App() {
  return (
    <div className="flex min-h-screen flex-col bg-[linear-gradient(90deg,#131f20_0%,#24443f_50%,#2b5247_60%,#39363f_85%,#131b18_100%)] font-['Inter',sans-serif]">
      <MenuBar />
      <div className="flex flex-1 flex-col rounded-b-2xl bg-[#0d0d0d]">
        <BrowserWindow />
        <div aria-hidden className="h-[13px] overflow-hidden rounded-b-2xl border-b border-[#303030] pt-1 pl-[543px] text-lg font-semibold whitespace-nowrap text-[#8a8a8a]">
          PDF Extractor the content using candidate summary, reviewing in Code node
        </div>
      </div>
      <Dock />
    </div>
  );
}
